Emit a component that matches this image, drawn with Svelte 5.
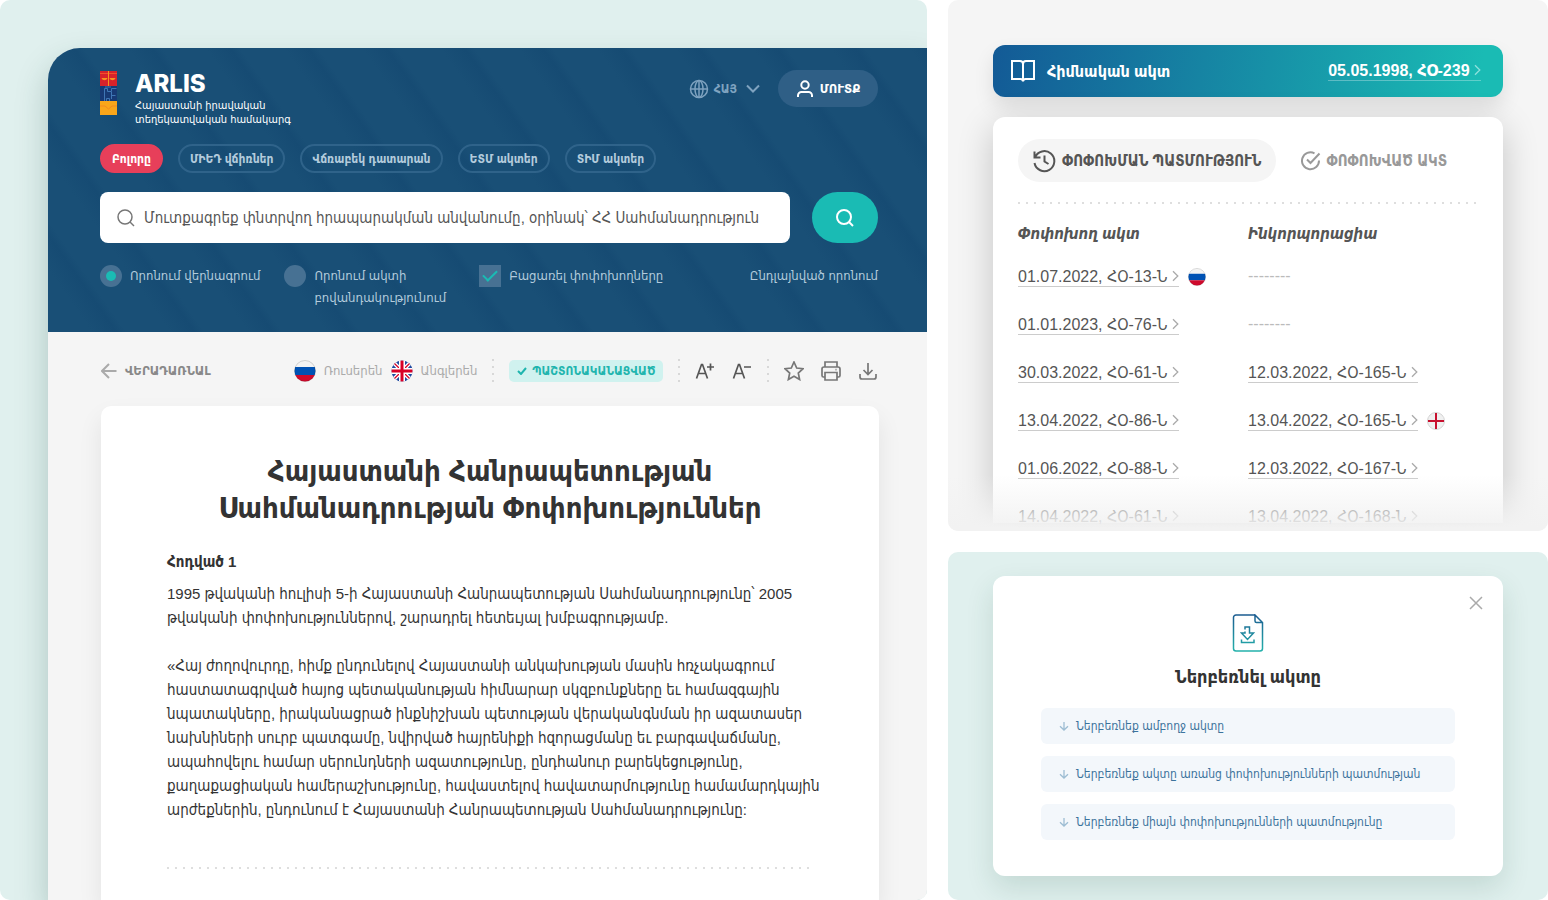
<script>
    let search = $state('Մուտքագրեք փնտրվող հրապարակման անվանումը, օրինակ՝ ՀՀ Սահմանադրություն')
    let scope = $state('title')
    let exclude = $state(true)
    let activeChip = $state(0)

    const chips = ['Բոլորը', 'ՄԻԵԴ վճիռներ', 'Վճռաբեկ դատարան', 'ԵՏՄ ակտեր', 'ՏԻՄ ակտեր']

    const history = [
        { act: '01.07.2022, ՀՕ-13-Ն', flag: 'ru' },
        { act: '01.01.2023, ՀՕ-76-Ն' },
        { act: '30.03.2022, ՀՕ-61-Ն', inc: '12.03.2022, ՀՕ-165-Ն' },
        { act: '13.04.2022, ՀՕ-86-Ն', inc: '13.04.2022, ՀՕ-165-Ն', incFlag: 'en' },
        { act: '01.06.2022, ՀՕ-88-Ն', inc: '12.03.2022, ՀՕ-167-Ն' },
        { act: '14.04.2022, ՀՕ-61-Ն', inc: '13.04.2022, ՀՕ-168-Ն' },
    ]

    const downloads = [
        'Ներբեռնեք ամբողջ ակտը',
        'Ներբեռնեք ակտը առանց փոփոխությունների պատմության',
        'Ներբեռնեք միայն փոփոխությունների պատմությունը',
    ]
</script>

{#snippet chevron()}
    <svg class="chevron" width="7" height="12" viewBox="0 0 7 12"><path d="M1 1.2L5.8 6L1 10.8" /></svg>
{/snippet}

{#snippet flagRu(size)}
    <svg class="flag" width={size} height={size} viewBox="0 0 22 22">
        <clipPath id="ru{size}"><circle cx="11" cy="11" r="10.5" /></clipPath>
        <g clip-path="url(#ru{size})">
            <path fill="#f3f3f3" d="M0 0h22v7H0z" />
            <path fill="#0052b4" d="M0 7h22v8H0z" />
            <path fill="#cf0a2c" d="M0 15h22v7H0z" />
        </g>
        <circle cx="11" cy="11" r="10.5" fill="none" stroke="#000" stroke-opacity=".15" />
    </svg>
{/snippet}

<div class="page">
    <section class="panel mint portal">
        <div class="app">
            <header>
                <div class="top">
                    <a class="logo" href="/">
                        <svg width="18" height="46" viewBox="0 0 18 46">
                            <path fill="#d8222a" d="M0 1h17v15H0z" />
                            <path fill="#f0502a" d="M0 3h17v1H0z" />
                            <path stroke="#f7931e" fill="none" d="M8.500 1v15" />
                            <path fill="#f7931e" d="M1.500 8h6c-1 3-5 3-6 0zM9.500 8h6c-1 3-5 3-6 0z" />
                            <path fill="#173a75" d="M0 16h17v15H0z" />
                            <path stroke="#3f76b5" fill="none" d="M4.500 31V18.500h3v3h4v-3h5M11.500 22v7M6.500 31v-2.500h3V31M11.500 25.500h4M5 17h6" />
                            <path fill="#faa61a" d="M0 31h17v14H0z" />
                            <path stroke="#f58a1f" fill="none" d="M0 36h5l3.500 3 3.500-3h5" />
                        </svg>
                        <span>
                            <strong>ARLIS</strong>
                            <small>Հայաստանի իրավական<br />տեղեկատվական համակարգ</small>
                        </span>
                    </a>
                    <div class="account">
                        <button class="lang">
                            <svg width="20" height="20" viewBox="0 0 20 20">
                                <circle cx="10" cy="10" r="8.5" />
                                <ellipse cx="10" cy="10" rx="4" ry="8.5" />
                                <path d="M1.500 10h17M10 1.500v17" />
                            </svg>
                            ՀԱՅ
                            <svg class="down" width="14" height="9" viewBox="0 0 14 9"><path d="M1 1.500l6 6 6-6" /></svg>
                        </button>
                        <button class="login">
                            <svg width="18" height="20" viewBox="0 0 18 20">
                                <circle cx="9" cy="6" r="3.700" />
                                <path d="M2 18v-1.500a3.500 3.500 0 0 1 3.500-3.500h7a3.500 3.500 0 0 1 3.500 3.500v1.500" />
                            </svg>
                            ՄՈՒՏՔ
                        </button>
                    </div>
                </div>

                <div class="chips">
                    {#each chips as chip, idx}
                        <button class:active={idx == activeChip} onclick={() => activeChip = idx}>{chip}</button>
                    {/each}
                </div>

                <div class="search">
                    <label class="field">
                        <svg width="18" height="18" viewBox="0 0 18 18"><circle cx="8" cy="8" r="7" /><path d="M13 13l4 4" /></svg>
                        <input type="text" aria-label="Որոնում" bind:value={search} />
                    </label>
                    <button aria-label="Որոնում">
                        <svg width="18" height="18" viewBox="0 0 18 18"><circle cx="8" cy="8" r="7" /><path d="M13 13l4 4" /></svg>
                    </button>
                </div>

                <div class="options">
                    <label>
                        <input type="radio" name="scope" value="title" bind:group={scope} />
                        <span>Որոնում վերնագրում</span>
                    </label>
                    <label class="wrap">
                        <input type="radio" name="scope" value="content" bind:group={scope} />
                        <span>Որոնում ակտի<br />բովանդակությունում</span>
                    </label>
                    <label>
                        <input type="checkbox" bind:checked={exclude} />
                        <span>Բացառել փոփոխողները</span>
                    </label>
                    <a href="/advanced">Ընդլայնված որոնում</a>
                </div>
            </header>

            <div class="toolbar">
                <a class="back" href="/">
                    <svg width="16" height="16" viewBox="0 0 16 16"><path d="M15.500 8H1M8 1L1 8l7 7" /></svg>
                    ՎԵՐԱԴԱՌՆԱԼ
                </a>
                <div class="langs">
                    <a href="/ru">{@render flagRu(22)} Ռուսերեն</a>
                    <a href="/en">
                        <svg class="flag" width="22" height="22" viewBox="0 0 22 22">
                            <clipPath id="uk"><circle cx="11" cy="11" r="10.500" /></clipPath>
                            <g clip-path="url(#uk)">
                                <path fill="#1f4aa0" d="M0 0h22v22H0z" />
                                <path stroke="#fff" stroke-width="4" d="M0 0l22 22M22 0L0 22" />
                                <path stroke="#d80027" stroke-width="1.300" d="M0 0l22 22M22 0L0 22" />
                                <path stroke="#fff" stroke-width="6" d="M11 0v22M0 11h22" />
                                <path stroke="#d80027" stroke-width="3" d="M11 0v22M0 11h22" />
                            </g>
                        </svg>
                        Անգլերեն
                    </a>
                </div>
                <i class="dots"></i>
                <span class="badge">
                    <svg width="10" height="8" viewBox="0 0 10 8"><path d="M1 4l3 3 5-6" /></svg>
                    ՊԱՇՏՈՆԱԿԱՆԱՑՎԱԾ
                </span>
                <i class="dots"></i>
                <div class="tools sizes">
                    <button aria-label="Մեծացնել">
                        <svg width="20" height="20" viewBox="0 0 20 20"><path d="M1.500 17.500L6.500 3.500h1L12.500 17.500M3.500 12.500h7M12 6h7M15.500 2.500v7" /></svg>
                    </button>
                    <button aria-label="Փոքրացնել">
                        <svg width="20" height="20" viewBox="0 0 20 20"><path d="M1.500 17.500L6.500 3.500h1L12.500 17.500M3.500 12.500h7M12 6h7" /></svg>
                    </button>
                </div>
                <i class="dots"></i>
                <div class="tools">
                    <button aria-label="Նախընտրած">
                        <svg width="20" height="20" viewBox="0 0 20 20"><path d="M10 1l2.700 6 6.300.700-4.700 4.300 1.300 6.500L10 15.300 4.400 18.500l1.300-6.500L1 7.700 7.300 7z" /></svg>
                    </button>
                    <button aria-label="Տպել">
                        <svg width="20" height="20" viewBox="0 0 20 20"><path d="M4 6V1h12v5M4 16H2.500A1.500 1.500 0 0 1 1 14.500V8a2 2 0 0 1 2-2h14a2 2 0 0 1 2 2v6.500a1.500 1.500 0 0 1-1.500 1.500H16M4 11.500h12V19H4zM14.500 8.700h1" /></svg>
                    </button>
                    <button aria-label="Ներբեռնել">
                        <svg width="20" height="20" viewBox="0 0 20 20"><path d="M10 2v11M5.500 9L10 13.500 14.500 9M2 13v3a2 2 0 0 0 2 2h12a2 2 0 0 0 2-2v-3" /></svg>
                    </button>
                </div>
            </div>

            <article>
                <h1>Հայաստանի Հանրապետության<br />Սահմանադրության Փոփոխություններ</h1>
                <h2>Հոդված 1</h2>
                <p>
                    1995 թվականի հուլիսի 5-ի Հայաստանի Հանրապետության Սահմանադրությունը՝ 2005<br />
                    թվականի փոփոխություններով, շարադրել հետեւյալ խմբագրությամբ.
                </p>
                <p>
                    «Հայ ժողովուրդը, հիմք ընդունելով Հայաստանի անկախության մասին հռչակագրում<br />
                    հաստատագրված հայոց պետականության հիմնարար սկզբունքները եւ համազգային<br />
                    նպատակները, իրականացրած ինքնիշխան պետության վերականգնման իր ազատասեր<br />
                    նախնիների սուրբ պատգամը, նվիրված հայրենիքի հզորացմանը եւ բարգավաճմանը,<br />
                    ապահովելու համար սերունդների ազատությունը, ընդհանուր բարեկեցությունը,<br />
                    քաղաքացիական համերաշխությունը, հավաստելով հավատարմությունը համամարդկային<br />
                    արժեքներին, ընդունում է Հայաստանի Հանրապետության Սահմանադրությունը:
                </p>
                <div class="rule"></div>
            </article>
        </div>
    </section>

    <div class="side">
        <section class="panel grey">
            <div class="base-act">
                <svg width="26" height="24" viewBox="0 0 26 24"><path d="M13 5a3 3 0 0 0-3-3H2v18h8.500c1.500 0 2.500.800 2.500 2.500 0-1.700 1-2.500 2.500-2.500H24V2h-8a3 3 0 0 0-3 3zM13 5v17" /></svg>
                <strong>Հիմնական ակտ</strong>
                <a href="/act">05.05.1998, ՀՕ-239 {@render chevron()}</a>
            </div>
            <div class="history">
                <div class="tabs">
                    <button class="active">
                        <svg width="24" height="24" viewBox="0 0 24 24"><path d="M2.500 2.500v6h6M3 8.500A10 10 0 1 1 2.500 14M12.500 6.500v6l4 2.500" /></svg>
                        ՓՈՓՈԽՄԱՆ ՊԱՏՄՈՒԹՅՈՒՆ
                    </button>
                    <button>
                        <svg width="20" height="20" viewBox="0 0 20 20"><path d="M18 9.500A8.500 8.500 0 1 1 13.500 2.300M6 8.500l3.500 3.500 9-9.500" /></svg>
                        ՓՈՓՈԽՎԱԾ ԱԿՏ
                    </button>
                </div>
                <div class="rule"></div>
                <table>
                    <thead>
                        <tr><th>Փոփոխող ակտ</th><th>Ինկորպորացիա</th></tr>
                    </thead>
                    <tbody>
                        {#each history as row}
                            <tr>
                                <td>
                                    <a href="/act">{row.act} {@render chevron()}</a>
                                    {#if row.flag}{@render flagRu(18)}{/if}
                                </td>
                                <td>
                                    {#if row.inc}
                                        <a href="/act">{row.inc} {@render chevron()}</a>
                                    {:else}
                                        <span class="none">--------</span>
                                    {/if}
                                    {#if row.incFlag}
                                        <svg class="flag" width="18" height="18" viewBox="0 0 18 18">
                                            <circle cx="9" cy="9" r="8.500" fill="#f0f0f0" stroke="#d5d5d5" />
                                            <path stroke="#c8102e" stroke-width="2" d="M9 1v16M1 9h16" />
                                        </svg>
                                    {/if}
                                </td>
                            </tr>
                        {/each}
                    </tbody>
                </table>
            </div>
        </section>

        <section class="panel mint">
            <div class="download">
                <button class="close" aria-label="Փակել">
                    <svg width="14" height="14" viewBox="0 0 14 14"><path d="M1 1l12 12M13 1L1 13" /></svg>
                </button>
                <svg class="doc" width="32" height="38" viewBox="0 0 32 38">
                    <defs>
                        <linearGradient id="doc" gradientUnits="userSpaceOnUse" x1="0" y1="0" x2="0" y2="38">
                            <stop offset="0" stop-color="#1b5a90" />
                            <stop offset="1" stop-color="#24b3ac" />
                        </linearGradient>
                    </defs>
                    <path d="M23 1H4a2.500 2.500 0 0 0-2.500 2.500v31A2.500 2.500 0 0 0 4 37h24a2.500 2.500 0 0 0 2.500-2.500V8.500L23 1v6a1.500 1.500 0 0 0 1.500 1.500h6M13 15.500v-2.500h4.500v6h4L15.500 25.500l-6-6.500H13v-1.500M9.500 25.500v3h12.500v-3" />
                </svg>
                <h3>Ներբեռնել ակտը</h3>
                <div class="links">
                    {#each downloads as item}
                        <a href="/download">
                            <svg width="10" height="10" viewBox="0 0 10 10"><path d="M5 1v8M1 5.200L5 9l4-3.800" /></svg>
                            {item}
                        </a>
                    {/each}
                </div>
            </div>
        </section>
    </div>
</div>

<style>
    :global(body) {
        background: #fff;
        font-family: "Liberation Sans", "DejaVu Sans Condensed", sans-serif;
        color: #333;
    }
    .page {
        display: grid;
        grid-template-columns: 927fr 600fr;
        gap: 21px;
        min-height: 100vh;
    }
    svg {
        flex: none;
        fill: none;
        stroke: currentColor;
        stroke-width: 2;
    }
    .logo svg, .flag {
        stroke: none;
        stroke-width: 1;
    }
    a {
        color: inherit;
        text-decoration: none;
    }
    button {
        display: flex;
        align-items: center;
        justify-content: center;
        padding: 0;
        border: none;
        background: none;
        color: inherit;
        font: inherit;
        white-space: nowrap;
        cursor: pointer;
    }
    h1, h2, h3, p {
        margin: 0;
    }
    .panel {
        border-radius: 10px;
        overflow: hidden;
        box-sizing: border-box;
    }
    .mint {
        background: #e0f0ee;
    }
    .grey {
        background: #f5f5f5;
    }
    .rule {
        height: 2px;
        background: linear-gradient(90deg, #dedede 2px, transparent 2px) 0 0 / 8px 2px;
    }

    /* portal */
    .portal {
        display: flex;
        padding: 48px 0 0 48px;
    }
    .app {
        flex: 1;
        display: flex;
        flex-direction: column;
        min-width: 0;
        border-top-left-radius: 32px;
        background: #f5f5f5;
        box-shadow: 0 16px 32px rgb(20, 70, 60, 25%);
    }
    header {
        padding: 22px 49px 23px 52px;
        border-top-left-radius: 32px;
        background: repeating-linear-gradient(55deg, #194f76 0, #194f76 36px, #164b73 56px, #194f76 64px);
        color: #b3cbdc;
    }
    .top {
        display: flex;
        justify-content: space-between;
        align-items: flex-start;
        height: 74px;
    }
    .logo {
        display: flex;
        gap: 17px;
        color: #fff;
    }
    .logo strong {
        display: block;
        font: 800 24px/28px Inter, sans-serif;
    }
    .logo small {
        display: block;
        font-size: 11px;
        line-height: 14px;
    }
    .account {
        display: flex;
        gap: 18px;
        font-size: 12px;
        font-weight: 700;
    }
    .lang {
        gap: 5px;
        color: #7fa3c0;
    }
    .lang svg {
        stroke-width: 1.5;
    }
    .lang .down {
        margin-left: 4px;
        stroke-width: 2;
    }
    .login {
        gap: 6px;
        width: 100px;
        height: 37px;
        border-radius: 19px;
        background: #2f5f86;
        color: #fff;
        font-size: 13px;
    }
    .chips {
        display: flex;
        gap: 15px;
    }
    .chips button {
        height: 29px;
        padding: 0 10px;
        border: 2px solid #2f638a;
        border-radius: 15px;
        font-size: 12px;
        font-weight: 700;
    }
    .chips .active {
        border-color: #e73f5a;
        background: #e73f5a;
        color: #fff;
    }
    .search {
        display: flex;
        gap: 22px;
        height: 51px;
        margin: 19px 0 22px;
    }
    .field {
        flex: 1;
        display: flex;
        align-items: center;
        gap: 9px;
        padding: 0 17px;
        border-radius: 8px;
        background: #fff;
        color: #777;
    }
    .search svg {
        stroke-width: 1.5;
    }
    .field input {
        flex: 1;
        min-width: 0;
        padding: 0;
        border: none;
        outline: none;
        font: inherit;
        font-size: 15px;
        color: #555;
    }
    .search button {
        width: 66px;
        border-radius: 26px;
        background: #1abbb4;
        color: #fff;
    }
    .search button svg {
        stroke-width: 2;
    }
    .options {
        display: flex;
        align-items: flex-start;
        font-size: 13px;
        line-height: 22px;
    }
    .options label {
        display: flex;
        gap: 8px;
        margin-right: 24px;
        white-space: nowrap;
    }
    .options .wrap {
        margin-right: 33px;
    }
    .options a {
        margin-left: auto;
        white-space: nowrap;
    }
    .options input {
        appearance: none;
        flex: none;
        display: grid;
        place-items: center;
        width: 22px;
        height: 22px;
        margin: 0;
        background: #477193;
    }
    .options input[type="radio"] {
        border-radius: 50%;
    }
    .options input[type="radio"]:checked::after {
        content: '';
        width: 10px;
        height: 10px;
        border-radius: 50%;
        background: #1abbb4;
    }
    .options input[type="checkbox"]:checked::after {
        content: '';
        width: 12px;
        height: 6px;
        margin-bottom: 4px;
        border: solid #1abbb4;
        border-width: 0 0 2px 2px;
        transform: rotate(-45deg);
    }

    .toolbar {
        display: flex;
        align-items: center;
        justify-content: space-between;
        height: 74px;
        padding: 3px 49px 0 53px;
        box-sizing: border-box;
        font-size: 13px;
        color: #aaa;
        white-space: nowrap;
    }
    .toolbar a, .badge {
        display: flex;
        align-items: center;
        gap: 8px;
    }
    .back {
        margin-right: 68px;
        font-weight: 700;
        color: #888;
    }
    .back svg {
        color: #aaa;
    }
    .langs {
        display: flex;
        gap: 8px;
    }
    .dots {
        width: 2px;
        height: 23px;
        background: linear-gradient(#d8d8d8 2px, transparent 2px) 0 0 / 2px 7px;
    }
    .badge {
        gap: 5px;
        height: 22px;
        padding: 0 8px;
        border-radius: 5px;
        background: #d0f2ef;
        color: #1fb5ae;
        font-size: 12px;
        font-weight: 700;
    }
    .tools {
        display: flex;
        gap: 17px;
        color: #777;
    }
    .tools svg {
        stroke-width: 1.7;
    }
    .sizes {
        color: #555;
    }

    article {
        flex: 1;
        margin: 0 48px 0 53px;
        padding: 47px 66px 30px;
        border-radius: 10px 10px 0 0;
        background: #fff;
        box-shadow: 0 12px 24px rgb(0, 0, 0, 8%);
    }
    h1 {
        font-size: 29px;
        line-height: 37px;
        text-align: center;
        white-space: nowrap;
    }
    h2 {
        margin: 23px 0 8px;
        font-size: 15px;
        line-height: 24px;
    }
    p {
        margin-bottom: 24px;
        font-size: 15px;
        line-height: 24px;
        white-space: nowrap;
    }
    article .rule {
        margin-top: 45px;
    }

    /* right column */
    .side {
        display: grid;
        grid-template-rows: 531fr 348fr;
        gap: 21px;
    }
    .grey {
        display: flex;
        flex-direction: column;
        gap: 20px;
        position: relative;
        padding: 45px 45px 8px;
    }
    .grey::after {
        content: '';
        position: absolute;
        inset: auto 0 0 0;
        height: 56px;
        background: linear-gradient(rgb(243, 243, 243, 0), #f2f2f2 95%);
        pointer-events: none;
    }
    .base-act {
        display: flex;
        align-items: center;
        gap: 11px;
        height: 52px;
        padding: 0 22px 0 17px;
        border-radius: 12px;
        background: linear-gradient(100deg, #135a96, #1abbb4 95%);
        box-shadow: 0 10px 20px rgb(0, 0, 0, 10%);
        color: #fff;
        font-size: 16px;
        font-weight: 700;
    }
    .base-act a {
        margin-left: auto;
        border-bottom: 1px solid rgb(255, 255, 255, 30%);
    }
    .chevron {
        color: #aaa;
        stroke-width: 1.3;
    }
    .base-act .chevron {
        color: #8fe0dc;
    }
    .history {
        flex: 1;
        padding: 22px 25px 0;
        border-radius: 12px 12px 0 0;
        background: #fff;
        box-shadow: 0 10px 36px rgb(0, 0, 0, 20%);
    }
    .tabs {
        display: flex;
        gap: 25px;
        height: 43px;
        margin-bottom: 20px;
        font-size: 15px;
        font-weight: 700;
        color: #999;
    }
    .tabs button {
        gap: 6px;
    }
    .tabs .active {
        padding: 0 14px;
        border-radius: 22px;
        background: #f5f5f5;
        color: #555;
    }
    /* the last row runs past the card and fades out */
    table {
        width: 100%;
        border-collapse: collapse;
        table-layout: fixed;
        margin: 11px 0 -24px;
        font-size: 16px;
        color: #555;
    }
    th, td {
        padding: 0;
        text-align: left;
        white-space: nowrap;
    }
    th {
        height: 37px;
        font-size: 15px;
        font-style: italic;
    }
    td {
        height: 48px;
    }
    td a {
        padding-bottom: 1px;
        border-bottom: 1px solid #ccc;
    }
    td .flag {
        margin: -4px 0 -4px 5px;
        vertical-align: baseline;
    }
    .none {
        color: #bbb;
    }

    .side .mint {
        padding: 24px 45px;
    }
    .download {
        position: relative;
        display: flex;
        flex-direction: column;
        align-items: center;
        padding: 38px 48px 36px;
        border-radius: 12px;
        background: #fff;
        box-shadow: 0 12px 28px rgb(20, 80, 60, 14%);
    }
    .close {
        position: absolute;
        top: 20px;
        right: 20px;
        color: #aaa;
    }
    .close svg {
        stroke-width: 1.5;
    }
    .doc {
        stroke: url(#doc);
        stroke-width: 1.5;
    }
    h3 {
        margin: 13px 0 19px;
        font-size: 18px;
        line-height: 24px;
    }
    .links {
        display: grid;
        gap: 12px;
        width: 100%;
    }
    .links a {
        display: flex;
        align-items: center;
        gap: 7px;
        height: 36px;
        padding: 0 18px;
        border-radius: 6px;
        background: #f3f7fb;
        color: #3c739c;
        font-size: 12px;
        white-space: nowrap;
    }
    .links svg {
        color: #9dbdd3;
        stroke-width: 1.3;
    }
</style>
